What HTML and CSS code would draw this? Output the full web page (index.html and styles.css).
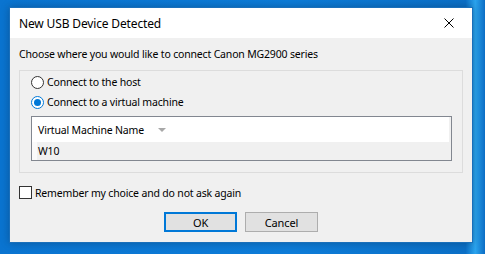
FILE: index.html
```html
<!DOCTYPE html>
<html lang="en">
<head>
    <meta charset="UTF-8">
    <title>New USB Device Detected</title>
    <link rel="stylesheet" href="styles.css">
</head>
<body>
    <div class="dialog">
        <div class="title-bar">
            <span class="title">New USB Device Detected</span>
            <span class="close">
                <svg width="10" height="10" viewBox="0 0 10 10"><path d="M0.5 0.5L9.5 9.5M9.5 0.5L0.5 9.5" stroke="#000" stroke-width="1" fill="none"/></svg>
            </span>
        </div>

        <div class="dialog-body">
            <p class="prompt">Choose where you would like to connect Canon MG2900 series</p>

            <div class="group">
                <label class="option"><span class="radio"></span>Connect to the host</label>
                <label class="option"><span class="radio checked"></span>Connect to a virtual machine</label>

                <div class="list">
                    <div class="list-header">
                        <span class="column">Virtual Machine Name</span>
                        <span class="sort-arrow"></span>
                    </div>
                    <div class="list-row">W10</div>
                </div>
            </div>

            <label class="remember"><span class="checkbox"></span>Remember my choice and do not ask again</label>

            <div class="buttons">
                <button class="btn default">OK</button>
                <button class="btn">Cancel</button>
            </div>
        </div>
    </div>
</body>
</html>
```

FILE: styles.css
```css
body {
    margin: 0;
    padding: 7px 0 0 9px;
    height: 254px;
    box-sizing: border-box;
    overflow: hidden;
    font-family: "Noto Sans", sans-serif;
    font-size: 10.5px;
    letter-spacing: -0.17px;
    color: #000;
    background: linear-gradient(90deg, #0a74d0 0%, #0d7cd8 60%, #0b6fc6 96%, #2ba4ee 98%, #0c6dc4 100%);
}
.dialog {
    width: 464px;
    height: 236px;
    box-sizing: border-box;
    border: 1px solid #1a6fba;
    background-color: #f0f0f0;
    display: flex;
    flex-direction: column;
    box-shadow: 0 0 8px rgba(0,0,0,0.25);
}
.title-bar {
    height: 30px;
    background-color: white;
    display: flex;
    align-items: center;
    justify-content: space-between;
    padding-left: 9px;
}
.title {
    font-size: 12px;
    letter-spacing: -0.15px;
}
.close {
    width: 46px;
    height: 30px;
    display: flex;
    align-items: center;
    justify-content: center;
}
.dialog-body {
    flex: 1;
    display: flex;
    flex-direction: column;
    padding: 0 9px 0 9px;
}
.prompt {
    margin: 8px 0 0 0;
    line-height: 17px;
}
.group {
    margin-top: 7px;
    border: 1px solid #dcdcdc;
    padding: 1px 10px 11px 11px;
    display: flex;
    flex-direction: column;
}
.option {
    height: 20px;
    display: flex;
    align-items: center;
}
.radio {
    width: 13px;
    height: 13px;
    box-sizing: border-box;
    border: 1px solid #333;
    border-radius: 50%;
    background-color: white;
    margin-right: 3px;
    position: relative;
}
.radio.checked {
    border-color: #0078d7;
}
.radio.checked::after {
    content: "";
    position: absolute;
    left: 2px;
    top: 2px;
    width: 7px;
    height: 7px;
    border-radius: 50%;
    background-color: #0078d7;
}
.list {
    margin-top: 4px;
    height: 45px;
    box-sizing: border-box;
    border: 1px solid #828790;
    background-color: #f0f0f0;
    display: flex;
    flex-direction: column;
}
.list-header {
    height: 25px;
    margin-right: 2px;
    background-color: white;
    display: flex;
    align-items: center;
    padding-left: 6px;
}
.sort-arrow {
    margin-left: 14px;
    width: 0;
    height: 0;
    border-left: 4px solid transparent;
    border-right: 4px solid transparent;
    border-top: 4px solid #a8a8a8;
}
.list-row {
    height: 18px;
    display: flex;
    align-items: center;
    padding-left: 1px;
    margin-left: 5px;
    box-shadow: -5px 0 0 #fafafa;
}
.remember {
    margin-top: 13px;
    height: 13px;
    display: flex;
    align-items: center;
}
.checkbox {
    width: 13px;
    height: 13px;
    box-sizing: border-box;
    border: 1px solid #333;
    background-color: white;
    margin-right: 3px;
}
.buttons {
    margin-top: 13px;
    display: flex;
    justify-content: center;
    gap: 8px;
}
.btn {
    width: 73px;
    height: 20px;
    box-sizing: border-box;
    border: 1px solid #adadad;
    background-color: #e1e1e1;
    font-family: "Noto Sans", sans-serif;
    font-size: 11px;
    letter-spacing: -0.1px;
    padding: 0;
    color: #000;
}
.btn.default {
    border: 2px solid #0078d7;
}
```
